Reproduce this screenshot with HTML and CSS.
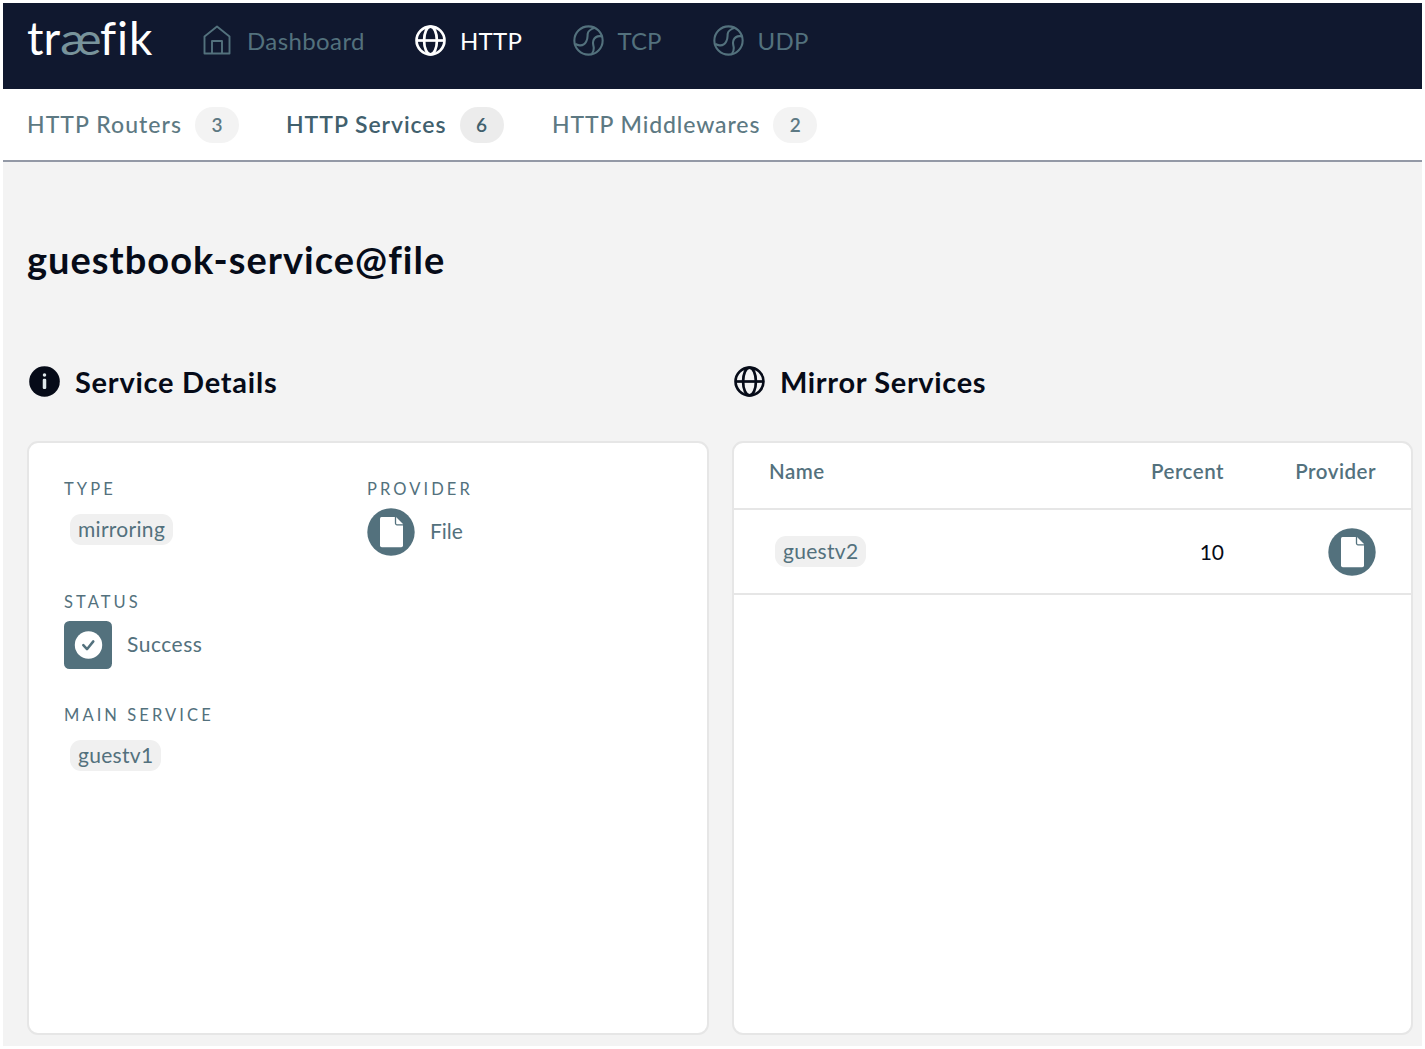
FILE: index.html
```html
<!DOCTYPE html>
<html lang="en">
<head>
<meta charset="utf-8">
<title>Traefik - guestbook-service@file</title>
<link rel="stylesheet" href="styles.css">
</head>
<body>
<svg class="defs" width="0" height="0" aria-hidden="true">
  <symbol id="globe" viewBox="0 0 30 30">
    <g fill="none" stroke="currentColor" stroke-width="2.6"><circle cx="15" cy="15" r="13.5"/><ellipse cx="15" cy="15" rx="6.2" ry="13.5"/><path d="M1.5 15h27"/></g>
  </symbol>
  <symbol id="ball" viewBox="0 0 30 30">
    <g fill="none" stroke="currentColor" stroke-width="2"><circle cx="15" cy="15" r="13.7"/><path d="M21 2.800C17.500 4 14.500 5.500 14.200 8.500c-.3 3 .3 4.500-1.400 7.500-1.500 2.800-3.800 4-6.400 3.700-1.600-.1-3-.6-4.200-1.300"/><path d="M28 11c-4.200-.8-7 .8-8.300 4-1.100 3 .3 4.800.4 7.300.1 2.300-.6 4-1.800 5.700"/></g>
  </symbol>
  <symbol id="home" viewBox="0 0 28 30">
    <g fill="none" stroke="currentColor" stroke-width="1.900" stroke-linejoin="round"><path d="M1.500 28.500V11.500L14 1.500l12.500 10v17z"/><path d="M9 28.500V16h10v12.500"/></g>
  </symbol>
  <symbol id="file" viewBox="0 0 48 48">
    <circle cx="24" cy="24" r="23.700" fill="#53717d"/>
    <path d="M14.500 9h14.500l7 7v21.500a1.800 1.800 0 0 1-1.800 1.800H14.800a1.800 1.800 0 0 1-1.800-1.800V10.500A1.500 1.500 0 0 1 14.500 9z" fill="#fff"/>
    <path d="M28.500 9v6.300a1.500 1.500 0 0 0 1.500 1.500H36" fill="none" stroke="#53717d" stroke-width="1.300"/>
  </symbol>
</svg>
<div class="app">
  <header class="nav">
    <div class="logo"><span class="tr">tr</span><span class="ae">æ</span><span class="fik">fik</span></div>
    <a class="item home"><svg width="28" height="30"><use href="#home"/></svg><span class="t-dash">Dashboard</span></a>
    <a class="item on http"><svg width="31" height="31"><use href="#globe"/></svg><span class="t-http">HTTP</span></a>
    <a class="item tcp"><svg width="31" height="31"><use href="#ball"/></svg><span class="t-tcp">TCP</span></a>
    <a class="item udp"><svg width="31" height="31"><use href="#ball"/></svg><span class="t-udp">UDP</span></a>
  </header>
  <nav class="tabs">
    <a class="tab routers"><span class="name">HTTP Routers</span><span class="count">3</span></a>
    <a class="tab active services"><span class="name">HTTP Services</span><span class="count">6</span></a>
    <a class="tab middlewares"><span class="name">HTTP Middlewares</span><span class="count">2</span></a>
  </nav>
  <main>
    <h1><span>guestbook-service@file</span></h1>
    <div class="columns">
      <section>
        <h2><svg width="31" height="31" viewBox="0 0 30 30"><circle cx="15" cy="15" r="14.800" fill="#060b18"/><rect x="13.300" y="12.300" width="3.400" height="10" rx="1.200" fill="#dfe9ec"/><circle cx="15" cy="8.700" r="1.700" fill="#dfe9ec"/></svg><span class="t-details">Service Details</span></h2>
        <div class="card details">
          <div class="field type"><div class="label">TYPE</div><div class="value"><span class="chip mirroring">mirroring</span></div></div>
          <div class="field provider"><div class="label">PROVIDER</div><div class="value"><svg width="48" height="48"><use href="#file"/></svg><span class="text t-file">File</span></div></div>
          <div class="field status"><div class="label">STATUS</div><div class="value"><svg width="48" height="48" viewBox="0 0 48 48"><rect width="48" height="48" rx="5.500" fill="#53717d"/><circle cx="24.500" cy="24" r="13.700" fill="#fff"/><path d="M19.300 24.200l3.700 4 6.300-7.800" fill="none" stroke="#53717d" stroke-width="2.500" stroke-linecap="round" stroke-linejoin="round"/></svg><span class="text t-success">Success</span></div></div>
          <div class="field main"><div class="label">MAIN SERVICE</div><div class="value"><span class="chip guest">guestv1</span></div></div>
        </div>
      </section>
      <section>
        <h2><svg width="31" height="31"><use href="#globe"/></svg><span class="t-mirror">Mirror Services</span></h2>
        <div class="card table">
          <div class="row head"><span class="c-name">Name</span><span class="c-percent">Percent</span><span class="c-provider">Provider</span></div>
          <div class="row"><span class="c-name"><span class="chip guest">guestv2</span></span><span class="c-percent">10</span><span class="c-provider"><svg width="48" height="48"><use href="#file"/></svg></span></div>
        </div>
      </section>
    </div>
  </main>
</div>
</body>
</html>
```
FILE: styles.css
```css
* { box-sizing: border-box; }
body { margin: 0; padding: 3px; background: #fff; color: #060b18; font-family: Lato, "Open Sans", sans-serif; }
svg { display: block; flex: none; }
.defs { position: absolute; }
.app { width: 1419px; height: 1043px; background: #f3f3f3; display: flex; flex-direction: column; }
.nav { height: 86px; flex: none; background: #10182f; padding-left: 24px; display: flex; align-items: flex-start; color: #53717d; }
.logo { width: 176px; height: 70px; line-height: 70px; font-size: 46px; color: #fff; white-space: nowrap; display: flex; font-variant-ligatures: none; }
.logo .tr { width: 33px; }
.logo .ae { width: 40px; color: #78939b; font-weight: 400; font-size: 44px; transform: scaleX(1.18); transform-origin: left; display: block; }
.logo .fik { letter-spacing: .9px; }
.item { height: 74px; display: flex; align-items: center; gap: 16px; font-size: 24px; white-space: nowrap; }
.item.on { color: #fff; }
.home { width: 212px; }
.http { width: 157.500px; gap: 14px; }
.tcp { width: 140px; gap: 14px; }
.udp { gap: 14px; }
.t-dash { letter-spacing: .4px; }
.t-http, .t-udp { letter-spacing: .3px; }
.tabs { height: 73px; flex: none; background: #fff; border-bottom: 2px solid #9399a6; padding-left: 24px; display: flex; align-items: center; color: #5d7983; font-size: 23px; font-weight: 500; }
.name { position: relative; top: -1px; }
.tab { display: flex; align-items: center; gap: 13px; white-space: nowrap; letter-spacing: 1.050px; }
.tab.middlewares { letter-spacing: .9px; }
.tab.active { color: #41606d; font-weight: 600; letter-spacing: .95px; }
.routers { width: 259px; }
.services { width: 266px; }
.count { width: 44px; height: 36px; border-radius: 18px; background: #f3f3f3; font-size: 19px; font-weight: 600; line-height: 35px; text-align: center; letter-spacing: 0; }
.active .count { background: #ececec; }
main { flex: 1; padding: 60px 9px 11px 24px; display: flex; flex-direction: column; }
h1 { margin: 0; height: 80px; line-height: 75px; font-size: 38px; font-weight: 700; letter-spacing: 1.020px; font-variant-ligatures: none; }
.columns { flex: 1; display: grid; grid-template-columns: 682px 680px; gap: 24px; }
section { display: flex; flex-direction: column; }
section + section { margin-left: -1px; }
h2 { margin: 40px 0 19px; height: 80px; padding-left: 2px; display: flex; align-items: center; gap: 15px; font-size: 29px; font-weight: 700; white-space: nowrap; }
h2 svg { margin-top: -1px; }
h2 span { margin-top: -2px; }
.t-details { letter-spacing: .75px; }
.t-mirror { letter-spacing: .65px; }
.card { flex: 1; background: #fff; border: 2px solid #e6e6e6; border-radius: 11px; }
.details { padding: 36px 35px; display: grid; grid-template-columns: 303px 1fr; grid-template-rows: 113px 113px 113px; color: #53717d; }
.main, .status { grid-column: 1; }
.label { height: 20px; line-height: 20px; font-size: 16.500px; letter-spacing: 3.080px; }
.value { height: 62px; margin-top: 2px; display: flex; align-items: center; gap: 15px; font-size: 21px; }
.text { margin-top: -3px; }
.t-success { letter-spacing: .5px; }
.field { white-space: nowrap; }
.chip { height: 31px; margin: -5px 0 0 6px; padding: 0 8px 2px; display: inline-flex; align-items: center; border-radius: 11px; background: #f0f0f0; color: #53717d; font-size: 21px; letter-spacing: .3px; }
.row { display: grid; grid-template-columns: 1fr 130px 152px; align-items: center; height: 85px; padding: 0 35px; border-bottom: 2px solid #e6e6e6; font-size: 21px; }
.head { height: 67px; padding-bottom: 10px; color: #53717d; font-weight: 600; font-size: 20.500px; letter-spacing: .5px; }
.row .chip { margin-top: 0; vertical-align: middle; }
.c-percent { text-align: right; }
.c-provider { display: flex; justify-content: flex-end; }
```
